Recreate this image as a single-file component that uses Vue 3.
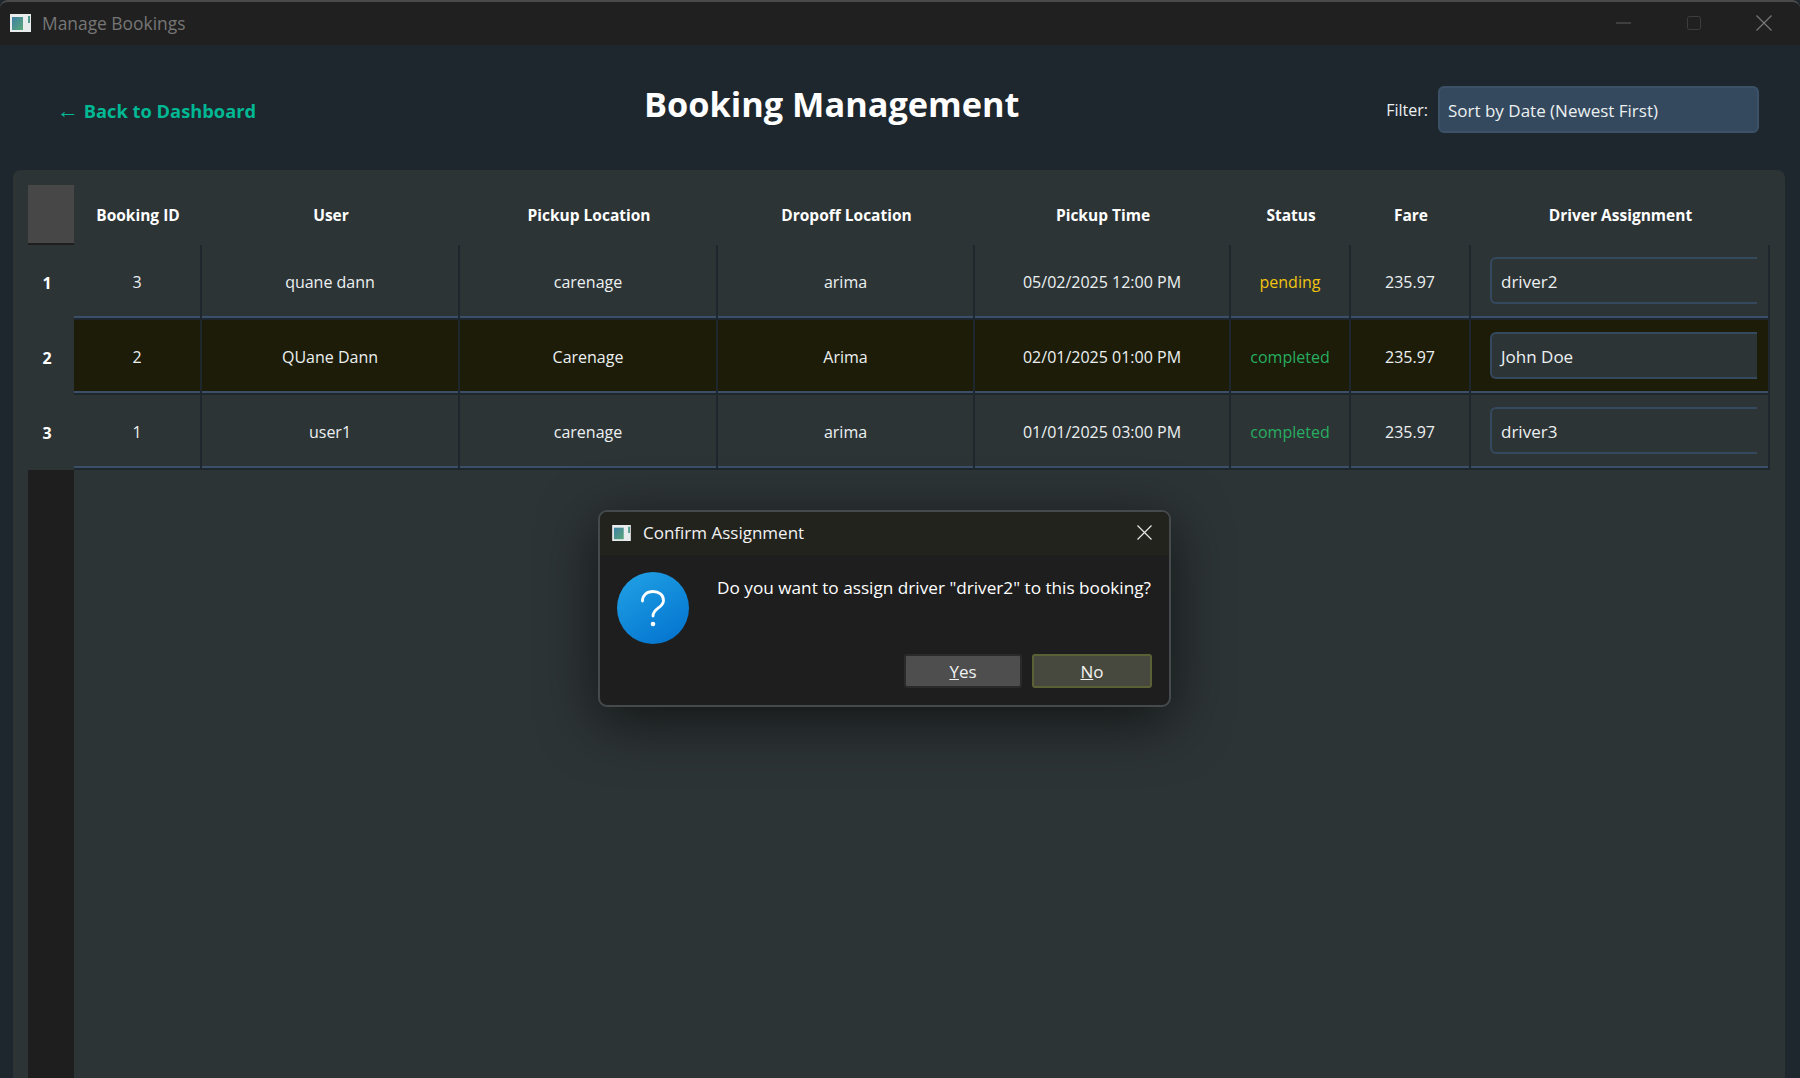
<script setup>
const columns = ['Booking ID', 'User', 'Pickup Location', 'Dropoff Location', 'Pickup Time', 'Status', 'Fare', 'Driver Assignment']

const bookings = [
  { id: 3, user: 'quane dann', pickup: 'carenage', dropoff: 'arima', time: '05/02/2025 12:00 PM', status: 'pending', fare: '235.97', driver: 'driver2' },
  { id: 2, user: 'QUane Dann', pickup: 'Carenage', dropoff: 'Arima', time: '02/01/2025 01:00 PM', status: 'completed', fare: '235.97', driver: 'John Doe', selected: true },
  { id: 1, user: 'user1', pickup: 'carenage', dropoff: 'arima', time: '01/01/2025 03:00 PM', status: 'completed', fare: '235.97', driver: 'driver3' }
]
</script>

<template>
  <div class="window">
    <div class="titlebar">
      <svg class="app-icon" width="21" height="18" viewBox="0 0 21 18">
        <rect width="21" height="18" fill="#e8ecec" />
        <defs>
          <linearGradient id="tile" x1="0" y1="0" x2="1" y2="1">
            <stop offset="0" stop-color="#3f7fa6" />
            <stop offset="1" stop-color="#5aa878" />
          </linearGradient>
        </defs>
        <rect x="2" y="3" width="11" height="13" fill="url(#tile)" />
        <rect x="18" y="2" width="2" height="7" fill="#4f9a8a" />
      </svg>
      <span class="window-title">Manage Bookings</span>
      <div class="controls">
        <svg width="16" height="16" viewBox="0 0 16 16"><path d="M0 8h15" stroke="#5e5e5e" stroke-width="1" /></svg>
        <svg width="16" height="16" viewBox="0 0 16 16"><rect x="1.5" y="1.5" width="13" height="13" rx="2" fill="none" stroke="#3d3d3d" /></svg>
        <svg width="16" height="16" viewBox="0 0 16 16"><path d="M.5.5l15 15M15.5.5l-15 15" stroke="#7a7a7a" stroke-width="1.1" /></svg>
      </div>
    </div>

    <header class="top">
      <a class="back"><span class="arrow">←</span> Back to Dashboard</a>
      <h1>Booking Management</h1>
      <div class="filter">
        <label>Filter:</label>
        <div class="select">Sort by Date (Newest First)</div>
      </div>
    </header>

    <section class="panel">
      <div class="table">
        <div class="corner"></div>
        <div v-for="c in columns" :key="c" class="th">{{ c }}</div>

        <template v-for="(b, i) in bookings" :key="b.id">
          <div class="rownum">{{ i + 1 }}</div>
          <div class="td" :class="{ sel: b.selected }">{{ b.id }}</div>
          <div class="td" :class="{ sel: b.selected }">{{ b.user }}</div>
          <div class="td" :class="{ sel: b.selected }">{{ b.pickup }}</div>
          <div class="td" :class="{ sel: b.selected }">{{ b.dropoff }}</div>
          <div class="td" :class="{ sel: b.selected }">{{ b.time }}</div>
          <div class="td" :class="[b.status, { sel: b.selected }]">{{ b.status }}</div>
          <div class="td" :class="{ sel: b.selected }">{{ b.fare }}</div>
          <div class="td driver" :class="{ sel: b.selected }">
            <div class="combo">{{ b.driver }}</div>
          </div>
        </template>
      </div>
      <div class="rest">
        <div class="rest-head"></div>
      </div>
    </section>

    <div class="dialog">
      <div class="dialog-title">
        <svg class="app-icon" width="19" height="16" viewBox="0 0 21 18">
          <rect width="21" height="18" fill="#e8ecec" />
          <rect x="2" y="3" width="11" height="13" fill="url(#tile)" />
          <rect x="18" y="2" width="2" height="7" fill="#4f9a8a" />
        </svg>
        <span>Confirm Assignment</span>
        <svg class="dialog-close" width="15" height="15" viewBox="0 0 15 15"><path d="M.5.5l14 14M14.5.5l-14 14" stroke="#e6e6e6" stroke-width="1.2" /></svg>
      </div>
      <div class="dialog-body">
        <svg class="question" width="72" height="72" viewBox="0 0 72 72">
          <defs>
            <linearGradient id="blue" x1="0.2" y1="0" x2="0.8" y2="1">
              <stop offset="0" stop-color="#1f9fe4" />
              <stop offset="1" stop-color="#0474cf" />
            </linearGradient>
          </defs>
          <circle cx="36" cy="36" r="36" fill="url(#blue)" />
          <path d="M25.500 29c0-6 4.500-9.500 10.500-9.500s10.500 3.500 10.500 9c0 7.500-10.500 7.500-10.500 15.500" fill="none" stroke="#fff" stroke-width="2.800" stroke-linecap="round" />
          <circle cx="36" cy="52" r="2.300" fill="#fff" />
        </svg>
        <p>Do you want to assign driver "driver2" to this booking?</p>
      </div>
      <div class="dialog-buttons">
        <button class="btn"><u>Y</u>es</button>
        <button class="btn default"><u>N</u>o</button>
      </div>
    </div>
  </div>
</template>

<style scoped>
.window {
  position: relative;
  height: 1078px;
  display: flex;
  flex-direction: column;
  overflow: hidden;
  background: #1e272e;
  color: #ecf0f1;
  font-family: "Open Sans", "Noto Sans", sans-serif;
  font-size: 16px;
}

.titlebar {
  height: 45px;
  flex: none;
  display: flex;
  align-items: center;
  padding: 0 28px 2px 10px;
  box-sizing: border-box;
  background: #202020;
  border-top: 2px solid #4a4a4a;
  border-radius: 8px 8px 0 0;
}

.app-icon {
  flex: none;
}

.window-title {
  margin-left: 11px;
  font-size: 17.400px;
  color: #767676;
}

.controls {
  margin-left: auto;
  display: flex;
  gap: 54px;
}

.top {
  height: 125px;
  flex: none;
  display: flex;
  align-items: center;
  padding: 5px 41px 0 57px;
  box-sizing: border-box;
}

.back {
  width: 196px;
  font-size: 18.300px;
  font-weight: 700;
  color: #00b894;
  white-space: nowrap;
}

.arrow {
  font-weight: 400;
  font-size: 22px;
  line-height: 1;
}

h1 {
  margin: 0 0 14px 391px;
  font-size: 34.300px;
  font-weight: 700;
  color: #fff;
  white-space: nowrap;
}

.filter {
  margin-left: auto;
  margin-bottom: 2px;
  display: flex;
  align-items: center;
  gap: 10px;
}

.filter label {
  margin-top: 2px;
}

.select {
  width: 321px;
  height: 47px;
  box-sizing: border-box;
  display: flex;
  align-items: center;
  padding: 2px 8px 0;
  background: #34495e;
  border: 2px solid #3c5168;
  border-radius: 6px;
  font-size: 17px;
}

.panel {
  flex: 1;
  margin: 0 15px 0 13px;
  padding: 15px 15px 0 15px;
  background: #2d3436;
  border-radius: 8px 8px 0 0;
  display: flex;
  flex-direction: column;
}

.table {
  display: grid;
  grid-template-columns: 46px 128px 258px 258px 257px 256px 120px 120px 299px;
  grid-template-rows: 60px repeat(3, 75px);
}

.corner {
  background: #474747;
  border-bottom: 2px solid #1e1e1e;
  box-sizing: border-box;
}

.th {
  display: flex;
  align-items: center;
  justify-content: center;
  font-weight: 700;
  font-size: 15.500px;
  color: #fff;
}

.rownum {
  display: flex;
  align-items: center;
  justify-content: center;
  padding-right: 8px;
  font-weight: 700;
  color: #fff;
}

.td {
  display: flex;
  align-items: center;
  justify-content: center;
  box-sizing: border-box;
  border-right: 2px solid #1e272e;
  box-shadow: inset 0 -2px 0 #1e272e, inset 0 -4px 0 #3b5068;
  padding-bottom: 1px;
}

.sel {
  background: #1c1c08;
}

.pending {
  color: #f1c40f;
}

.completed {
  color: #27ae60;
}

.driver {
  justify-content: flex-start;
  padding: 0 11px 5px 19px;
}

.combo {
  flex: 1;
  height: 47px;
  box-sizing: border-box;
  display: flex;
  align-items: center;
  padding: 2px 0 0 9px;
  background: #2d3436;
  border: 2px solid #34495e;
  border-right: none;
  border-radius: 6px 0 0 6px;
  font-size: 17px;
}

.rest {
  flex: 1;
}

.rest-head {
  width: 46px;
  height: 100%;
  background: #1e1e1e;
}

.dialog {
  position: absolute;
  left: 598px;
  top: 510px;
  width: 573px;
  height: 197px;
  box-sizing: border-box;
  border: 2px solid #454a4c;
  border-radius: 9px;
  background: #1e1e1e;
  box-shadow: 0 14px 56px rgba(0, 0, 0, 0.6);
  display: flex;
  flex-direction: column;
}

.dialog-title {
  height: 43px;
  flex: none;
  display: flex;
  align-items: center;
  gap: 12px;
  padding: 0 17px 2px 12px;
  box-sizing: border-box;
  background: #23231e;
  border-radius: 7px 7px 0 0;
  font-size: 17px;
  color: #f2f2f2;
}

.dialog-close {
  margin-left: auto;
}

.dialog-body {
  display: flex;
  align-items: flex-start;
  padding: 17px 17px 0 17px;
  gap: 28px;
  height: 82px;
}

.dialog-body p {
  margin: 4px 0 0;
  font-size: 17.200px;
  color: #fff;
  white-space: nowrap;
}

.question {
  flex: none;
}

.dialog-buttons {
  display: flex;
  justify-content: flex-end;
  gap: 10px;
  padding-right: 17px;
  margin-top: 0;
}

.btn {
  width: 118px;
  height: 34px;
  padding: 0;
  font: inherit;
  font-size: 17px;
  color: #f2f2f2;
  background: #4e4e4e;
  border: 2px solid #2a2a2a;
  border-radius: 3px;
}

.default {
  width: 120px;
  background: #48493e;
  border-color: #5b6135;
}
</style>

<style>
body {
  background: #1e272e;
}
</style>
